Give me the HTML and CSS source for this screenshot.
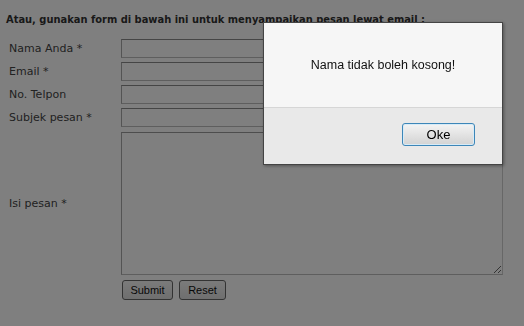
FILE: index.html
```html
<!DOCTYPE html>
<html lang="id">
<head>
    <meta charset="UTF-8">
    <meta name="viewport" content="width=device-width, initial-scale=1.0">
    <title>Kontak</title>
    <link rel="stylesheet" href="styles.css">
</head>
<body>
    <div class="page">
        <h4 class="intro">Atau, gunakan form di bawah ini untuk menyampaikan pesan lewat email :</h4>

        <form class="contact-form">
            <div class="row">
                <label for="nama">Nama Anda *</label>
                <input type="text" id="nama">
            </div>
            <div class="row">
                <label for="email">Email *</label>
                <input type="text" id="email">
            </div>
            <div class="row">
                <label for="telpon">No. Telpon</label>
                <input type="text" id="telpon">
            </div>
            <div class="row">
                <label for="subjek">Subjek pesan *</label>
                <input type="text" id="subjek">
            </div>
            <div class="row row-message">
                <label for="pesan">Isi pesan *</label>
                <textarea id="pesan"></textarea>
            </div>
            <div class="row row-actions">
                <span></span>
                <div class="actions">
                    <button type="button" class="form-button btn-submit">Submit</button>
                    <button type="reset" class="form-button btn-reset">Reset</button>
                </div>
            </div>
        </form>
    </div>

    <div class="overlay"></div>

    <div class="alert-box">
        <div class="alert-message">Nama tidak boleh kosong!</div>
        <div class="alert-footer">
            <button type="button" class="alert-button">Oke</button>
        </div>
    </div>
</body>
</html>
```

FILE: styles.css
```css
body {
    margin: 0;
    background-color: #fff;
    font-family: "DejaVu Sans", Verdana, sans-serif;
    font-size: 11px;
    color: #444;
}

.page {
    padding: 13px 0 0 8px;
}

.intro {
    margin: 0 0 13px -2px;
    font-family: "DejaVu Sans Condensed", "DejaVu Sans", sans-serif;
    font-stretch: condensed;
    font-size: 11px;
    line-height: 13px;
    font-weight: bold;
    color: #333;
}

.contact-form {
    display: flex;
    flex-direction: column;
    gap: 4px;
}

.row {
    display: grid;
    grid-template-columns: 113px 382px;
    align-items: center;
}

.row label {
    padding-left: 1px;
}

.row input {
    box-sizing: border-box;
    height: 19px;
    margin: 0;
    border: 1px solid;
    border-color: #8a8a8a #cfcfcf #bdbdbd #a8a8a8;
    background-color: #fff;
}

.row-message {
    margin-top: 1px;
}

.row textarea {
    box-sizing: border-box;
    height: 143px;
    margin: 0;
    border: 1px solid;
    border-color: #9a9a9a #cfcfcf #bdbdbd #a8a8a8;
    background-color: #fff;
}

.row-actions {
    margin-top: 1px;
}

.actions {
    display: flex;
    gap: 6px;
    padding-left: 1px;
}

.form-button {
    height: 20px;
    padding: 0;
    border: 1px solid #666;
    border-radius: 3px;
    background: linear-gradient(#f6f6f6, #dedede);
    font-family: "Liberation Sans", Arial, sans-serif;
    font-size: 11px;
    color: #111;
}

.btn-submit {
    width: 51px;
}

.btn-reset {
    width: 47px;
}

.overlay {
    position: fixed;
    top: 0;
    left: 0;
    right: 0;
    bottom: 0;
    background-color: rgba(0, 0, 0, 0.5);
}

.alert-box {
    position: absolute;
    top: 22px;
    left: 263px;
    width: 240px;
    box-sizing: border-box;
    border: 1px solid #444;
    background-color: #f6f6f6;
    box-shadow: 1px 1px 3px rgba(0, 0, 0, 0.35);
    font-family: "Liberation Sans", Arial, sans-serif;
}

.alert-message {
    height: 84px;
    display: flex;
    align-items: center;
    justify-content: center;
    font-size: 12.5px;
    color: #111;
    border-bottom: 1px solid #d6d6d6;
}

.alert-footer {
    height: 56px;
    box-sizing: border-box;
    display: flex;
    align-items: flex-start;
    justify-content: flex-end;
    padding: 15px 27px 0 0;
    background-color: #e9e9e9;
}

.alert-button {
    width: 73px;
    height: 23px;
    padding: 0;
    border: 1px solid #3d86b8;
    border-radius: 3px;
    background: linear-gradient(#f4f4f4, #e3e3e3 50%, #d3d3d3);
    box-shadow: inset 0 0 0 1px #d7ebf7;
    font-family: "Liberation Sans", Arial, sans-serif;
    font-size: 13px;
    color: #000;
}
```
